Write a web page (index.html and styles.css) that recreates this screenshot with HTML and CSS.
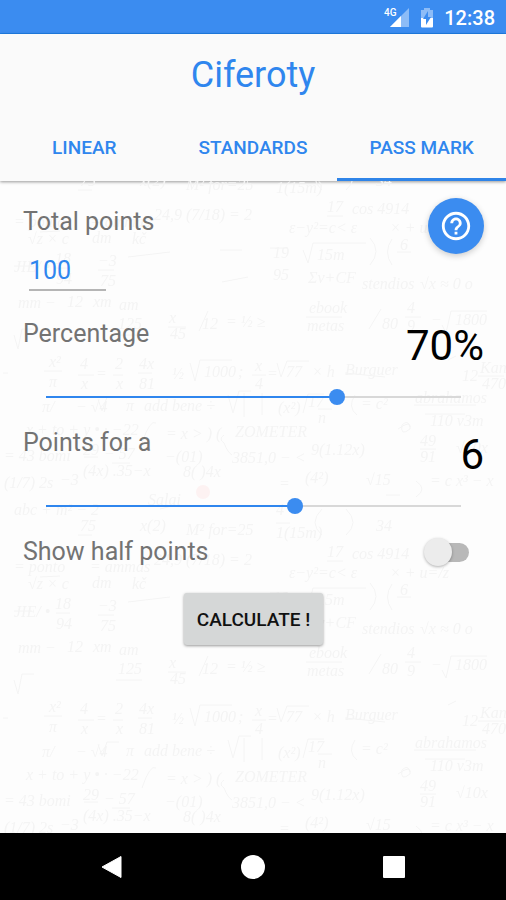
FILE: index.html
```html
<!DOCTYPE html>
<html lang="en">
<head>
<meta charset="utf-8">
<meta name="viewport" content="width=device-width, initial-scale=1">
<title>Ciferoty</title>
<link rel="stylesheet" href="styles.css">
</head>
<body>
<div class="status">
  <svg class="signal" viewBox="0 0 26 22" aria-hidden="true">
    <path d="M25 1v19H6z" fill="#8dbcf7"/>
    <path d="M17 9v11H6z" fill="#fff"/>
    <text class="network" x="0" y="9">4G</text>
  </svg>
  <svg class="battery" viewBox="0 0 14 22" aria-hidden="true">
    <path d="M4 1h6v2h3v9H1V3h3z" fill="#8dbcf7"/>
    <path d="M1 11h12v8.500q0 1-1 1H2q-1 0-1-1z" fill="#fff"/>
    <path d="M8 4v6h3l-5 8v-6H3z" fill="#3b8cf0"/>
  </svg>
  <time class="clock">12:38</time>
</div>
<header class="header">
  <h1 class="title">Ciferoty</h1>
  <nav class="tabs">
    <a class="tab" href="#linear">LINEAR</a>
    <a class="tab" href="#standards">STANDARDS</a>
    <a class="tab tab-active" href="#pass-mark" aria-current="page">PASS MARK</a>
  </nav>
</header>
<main class="main">
  <svg class="scribbles" aria-hidden="true">
    <defs>
      <pattern id="maths" width="506" height="345" patternUnits="userSpaceOnUse" patternTransform="translate(0 114)">
        <g class="ink">
          <path d="M3 78h5M44 76h18M78 80h16M113 80h10M138 78h14M190 68l5 18 5-21h32M252 80h14M277 68l4 14 6-16h22M345 78l40 4M448 65l8-4M478 81h26"/>
          <path d="M98 104l4 12 5-14h12M228 100l5 18 6-22h12M244 98v24M262 98v22M303 118l5-19h16M318 114h14M355 100q-8 12 2 20M414 110h62M425 119h40"/>
          <path d="M142 148q8-24 14-20M224 140q-6 4 0 8q4 10 8 12M398 134q14-10 12 0q-10 8-8-4q6-6 8 2M84 162h14M112 168h18M420 154h16"/>
          <path d="M160 214l12-3h22M386 200h14M416 186q12 8 0 16M322 240q-14-12 0-26M346 240q14-12 0-26M78 240h14M276 228h14"/>
          <path d="M40 282l20-1M128 307l42-5M220 300h22M14 316h18M56 318h14M98 320h16M222 332l26-5"/>
          <path d="M327 266h16M270 298h18M303 300l5 13 5-20h53M370 315q12-14 0-27M392 315q-9-13 0-26M397 302h14"/>
          <path d="M14 40l4 14 4-20h12M116 40h26M168 32h18M199 36l9-20M306 22h36M369 34l12-20M405 22h16M442 30l4 8 5-22h36"/>
        </g>
        <g class="notes">
          <text x="49" y="72">x²</text><text x="49" y="92">π</text><text x="80" y="74">4</text><text x="81" y="94">x</text><text x="96" y="84">=</text><text x="115" y="74">2</text><text x="116" y="94">x</text><text x="139" y="74">4x</text><text x="139" y="94">81</text><text x="172" y="84">½</text><text x="204" y="82">1000</text><text x="238" y="82">;</text><text x="255" y="76">x</text><text x="255" y="94">4</text><text x="267" y="84">=</text><text x="286" y="82">77</text><text x="312" y="82">× h</text><text x="345" y="80">Burguer</text><text x="462" y="86">12</text><text x="480" y="78">Kan</text><text x="482" y="94">470</text>
          <text x="42" y="117">π/</text><text x="76" y="117">− √4</text><text x="126" y="116">π</text><text x="144" y="116">add</text><text x="172" y="116">bene ÷</text><text x="278" y="118">(x²)</text><text x="308" y="112">17</text><text x="318" y="128">n</text><text x="361" y="114">= c²</text><text x="415" y="108">abrahamos</text><text x="430" y="131">110 v3m</text>
          <text x="26" y="140">x + to + y • · −22</text><text x="166" y="144">= x &gt; ) (</text><text x="235" y="142">ZOMETER</text><text x="4" y="166">= 43 bomi</text><text x="83" y="160">29</text><text x="104" y="164">− 57</text><text x="165" y="167">−(01)</text><text x="232" y="168">3851,0 − &lt;</text><text x="311" y="160">9(1.12x)</text><text x="420" y="151">49</text><text x="420" y="167">91</text><text x="456" y="158">√10x</text>
          <text x="4" y="193">(1/7) 2s</text><text x="60" y="190">−3</text><text x="83" y="181">(4x) .35−x</text><text x="183" y="182">8(   )4x</text><text x="279" y="194">=</text><text x="305" y="188">(4²)</text><text x="366" y="190">√15</text><text x="148" y="210">Salai</text><text x="430" y="191">= c  x³ − x</text>
          <text x="14" y="220">abc + m² − 2</text><text x="80" y="236">75</text><text x="140" y="236">x(2)</text><text x="186" y="240">M² for=25</text><text x="276" y="243">1(15m)</text><text x="376" y="236">34</text><text x="276" y="220">4</text>
          <text x="14" y="277">= ponto</text><text x="90" y="277">= ammas</text><text x="28" y="294">√z × c</text><text x="92" y="293">dm</text><text x="132" y="294">kč</text><text x="154" y="270">24,9 (7/18) = 2</text><text x="14" y="322">JIE/ •</text><text x="55" y="314">18</text><text x="56" y="334">94</text><text x="98" y="316">−3</text><text x="100" y="336">75</text>
          <text x="327" y="262">17</text><text x="352" y="264">cos 4914</text><text x="289" y="283">ε−y²=c&lt; ε</text><text x="390" y="283">× + u=/z</text><text x="273" y="308">19</text><text x="273" y="330">95</text><text x="317" y="310">15m</text><text x="400" y="300">6</text><text x="308" y="333">Σv+CF</text><text x="362" y="339">stendios</text><text x="420" y="339">√x ≈ 0 o</text>
          <text x="18" y="13">mm −</text><text x="67" y="12">12</text><text x="93" y="12">xm</text><text x="119" y="15">am</text><text x="118" y="34">125</text><text x="169" y="28">x</text><text x="170" y="44">45</text><text x="202" y="34">12</text><text x="226" y="32">= ½ ≥</text><text x="309" y="18">ebook</text><text x="307" y="36">metas</text><text x="382" y="34">80</text><text x="407" y="18">4</text><text x="407" y="36">9</text><text x="431" y="30">−</text><text x="455" y="30">1800</text>
        </g>
      </pattern>
    </defs>
    <rect width="100%" height="100%" fill="url(#maths)"/>
    <circle cx="203" cy="311" r="7" fill="#fdf2f2"/>
  </svg>
  <form class="form">
    <div class="field">
      <div class="total">
        <label class="label" for="total">Total points</label>
        <input class="number" id="total" type="text" inputmode="numeric" value="100">
      </div>
      <button class="help" type="button" aria-label="Help">
        <svg class="help-icon" viewBox="0 0 24 24" aria-hidden="true"><path fill="#fff" d="M11 18h2v-2h-2v2zm1-16C6.480 2 2 6.480 2 12s4.480 10 10 10 10-4.480 10-10S17.520 2 12 2zm0 18c-4.410 0-8-3.590-8-8s3.590-8 8-8 8 3.590 8 8-3.590 8-8 8zm0-14c-2.210 0-4 1.790-4 4h2c0-1.100.9-2 2-2s2 .9 2 2c0 2-3 1.750-3 5h2c0-2.250 3-2.500 3-5 0-2.210-1.790-4-4-4z"/></svg>
      </button>
    </div>
    <div class="setting">
      <div class="setting-head">
        <label class="label" for="percentage">Percentage</label>
        <output class="value" for="percentage">70%</output>
      </div>
      <input class="slider" id="percentage" type="range" min="0" max="100" value="70" style="--value: 70%">
    </div>
    <div class="setting">
      <div class="setting-head">
        <label class="label" for="points">Points for a</label>
        <output class="value" for="points">6</output>
      </div>
      <input class="slider" id="points" type="range" min="0" max="10" value="6" style="--value: 60%">
    </div>
    <div class="toggle">
      <label class="label" for="half">Show half points</label>
      <input class="switch" id="half" type="checkbox" role="switch">
    </div>
    <button class="calculate" type="button">CALCULATE !</button>
  </form>
</main>
<footer class="navbar">
  <button class="nav-button" type="button" aria-label="Back"><svg class="nav-icon" viewBox="0 0 24 24"><path d="M2 12 21 1.500v21z" fill="#fff" stroke="#fff" stroke-linejoin="round"/></svg></button>
  <button class="nav-button" type="button" aria-label="Home"><svg class="nav-icon" viewBox="0 0 24 24"><circle cx="12" cy="12" r="12" fill="#fff"/></svg></button>
  <button class="nav-button" type="button" aria-label="Recent apps"><svg class="nav-icon" viewBox="0 0 24 24"><rect x="1" y="1" width="22" height="22" rx="1" fill="#fff"/></svg></button>
</footer>
</body>
</html>
```

FILE: styles.css
```css
* {
  box-sizing: border-box;
}

body {
  margin: 0;
  min-height: 100vh;
  display: flex;
  flex-direction: column;
  background: #fdfdfd;
  color: #737373;
  font-family: Roboto, "Liberation Sans", sans-serif;
}

button,
input {
  font-family: inherit;
  margin: 0;
  border: 0;
}

.status {
  height: 34px;
  padding: 2px 11px 0;
  display: flex;
  align-items: center;
  justify-content: flex-end;
  background: #3b8cf0;
  border-bottom: 1px solid #1f7fe8;
  color: #fff;
}

.signal {
  width: 26px;
  height: 22px;
  margin-right: 10px;
}

.network {
  fill: #fff;
  font-size: 10px;
  font-weight: 500;
}

.battery {
  width: 14px;
  height: 22px;
  margin-right: 10px;
}

.clock {
  font-size: 20px;
  font-weight: 500;
  line-height: 24px;
}

.header {
  position: relative;
  background: #fafafa;
  box-shadow: 0 1px 3px rgba(0, 0, 0, 0.4);
}

.title {
  margin: 0;
  padding-top: 18px;
  color: #2f86ee;
  font-size: 36px;
  font-weight: 400;
  line-height: 46px;
  text-align: center;
}

.tabs {
  display: grid;
  grid-template-columns: repeat(3, 1fr);
  padding-top: 16px;
}

.tab {
  height: 67px;
  border-bottom: 3px solid transparent;
  color: #2f86ee;
  font-size: 19px;
  font-weight: 500;
  line-height: 68px;
  text-align: center;
  text-decoration: none;
}

.tab-active {
  border-color: #2f84e8;
}

.main {
  position: relative;
  flex: 1;
}

.scribbles {
  position: absolute;
  inset: 0;
  width: 100%;
  height: 100%;
}

.ink {
  fill: none;
  stroke: #f4f4f4;
  stroke-width: 1;
}

.notes {
  fill: #f4f4f4;
  font-family: "Liberation Serif", serif;
  font-size: 16px;
  font-style: italic;
}

.form {
  position: relative;
  padding: 17px 22px 24px 23px;
  display: flex;
  flex-direction: column;
}

.field {
  display: flex;
  align-items: flex-start;
  justify-content: space-between;
  margin-bottom: 28px;
}

.total {
  padding-top: 9px;
  display: flex;
  flex-direction: column;
}

.label {
  font-size: 25px;
  line-height: 30px;
}

.number {
  width: 77px;
  height: 40px;
  margin: 14px 0 0 6px;
  padding: 0;
  background: transparent;
  border-bottom: 2px solid #b5b5b5;
  color: #2f86ee;
  font-size: 25px;
}

.help {
  width: 56px;
  height: 56px;
  padding: 11px;
  border-radius: 50%;
  background: #3b8cf0;
  box-shadow: 0 2px 6px rgba(0, 0, 0, 0.2);
}

.help-icon {
  display: block;
  width: 34px;
  height: 34px;
}

.setting {
  margin-bottom: 22px;
}

.setting-head {
  display: flex;
  align-items: flex-start;
  justify-content: space-between;
}

.value {
  color: #000;
  font-size: 42px;
  font-weight: 400;
  line-height: 54px;
}

.slider {
  appearance: none;
  display: block;
  width: calc(100% - 30px);
  height: 18px;
  margin: 15px 15px 0;
  background:
    linear-gradient(to right, #2f86ee var(--value), #d8d8d8 var(--value))
    center / calc(100% - 16px) 2px no-repeat;
}

.slider::-webkit-slider-thumb {
  appearance: none;
  width: 16px;
  height: 16px;
  border-radius: 50%;
  background: #3b8cf0;
}

.toggle {
  display: flex;
  align-items: center;
  justify-content: space-between;
  padding-right: 15px;
}

.switch {
  appearance: none;
  position: relative;
  width: 40px;
  height: 19px;
  border-radius: 10px;
  background: #b8b8b8;
}

.switch::before {
  content: "";
  position: absolute;
  top: -5px;
  left: -5px;
  width: 28px;
  height: 28px;
  border-radius: 50%;
  background: #ececec;
  box-shadow: 0 1px 3px rgba(0, 0, 0, 0.3);
}

.switch:checked::before {
  left: 17px;
  background: #3b8cf0;
}

.calculate {
  align-self: center;
  height: 52px;
  margin-top: 26px;
  padding: 0 13px;
  border-radius: 3px;
  background: #d5d7d7;
  box-shadow: 0 1px 3px rgba(0, 0, 0, 0.4);
  color: #111;
  font-size: 19px;
  font-weight: 500;
}

.navbar {
  height: 67px;
  padding: 0 42px;
  display: grid;
  grid-template-columns: repeat(3, 1fr);
  background: #000;
}

.nav-button {
  display: flex;
  align-items: center;
  justify-content: center;
  padding: 0;
  background: transparent;
}

.nav-icon {
  width: 24px;
  height: 24px;
}
```
